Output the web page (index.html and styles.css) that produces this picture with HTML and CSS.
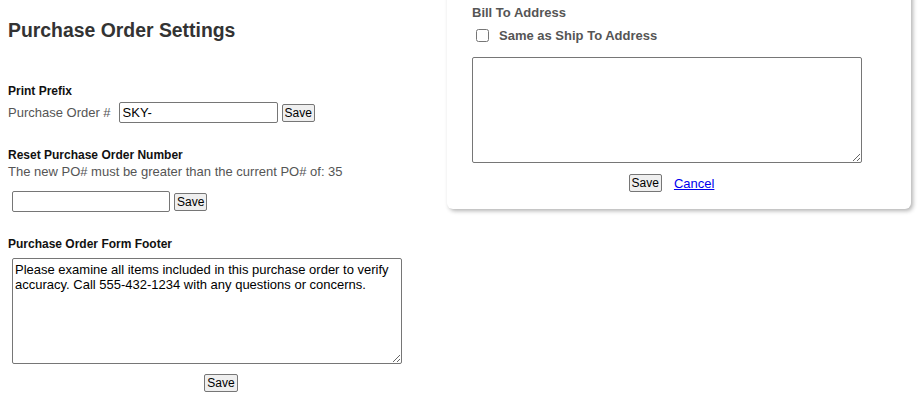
FILE: index.html
```html
<!DOCTYPE html>
<html lang="en">
<head>
  <meta charset="UTF-8" />
  <title>Purchase Order Settings</title>
  <link rel="stylesheet" href="styles.css">
</head>
<body>
  <div class="settings">
    <h1>Purchase Order Settings</h1>

    <!-- Print prefix -->
    <h3 class="label first">Print Prefix</h3>
    <div class="row">
      <span class="muted">Purchase Order #</span>
      <input type="text" class="prefix" value="SKY-" />
      <button>Save</button>
    </div>

    <!-- Reset PO number -->
    <h3 class="label">Reset Purchase Order Number</h3>
    <p class="muted desc">The new PO# must be greater than the current PO# of: 35</p>
    <div class="row indent">
      <input type="text" class="po-number" />
      <button>Save</button>
    </div>

    <!-- Footer -->
    <h3 class="label">Purchase Order Form Footer</h3>
    <textarea class="footer-text indent">Please examine all items included in this purchase order to verify accuracy. Call 555-432-1234 with any questions or concerns.</textarea>
    <div class="center-row">
      <button>Save</button>
    </div>
  </div>

  <!-- Bill to popup -->
  <div class="popup">
    <h4>Bill To Address</h4>
    <label class="check">
      <input type="checkbox" />
      Same as Ship To Address
    </label>
    <textarea class="address"></textarea>
    <div class="actions">
      <button>Save</button>
      <a href="#">Cancel</a>
    </div>
  </div>
</body>
</html>
```

FILE: styles.css
```css
body {
  font-family: "Liberation Sans", Arial, sans-serif;
  margin: 0;
  background-color: #fff;
  color: #111;
}
.settings {
  padding: 0 8px;
  width: 426px;
}
h1 {
  font-size: 19.4px;
  line-height: 23px;
  color: #333;
  margin: 19px 0 0;
}
.label {
  font-size: 12px;
  line-height: 14px;
  margin: 25px 0 0;
}
.label.first {
  margin-top: 42px;
}
.row {
  display: flex;
  align-items: center;
  gap: 4px;
  margin-top: 4px;
  height: 21px;
}
.muted {
  color: #555;
  font-size: 13px;
}
.row .muted {
  margin-right: 4px;
}
.desc {
  margin: 2px 0 12px;
  line-height: 15px;
}
.indent {
  margin-left: 4px;
}
input[type="text"] {
  font-family: inherit;
  font-size: 13px;
  height: 21px;
  box-sizing: border-box;
  border: 1px solid #767676;
  border-radius: 2px;
  padding: 0 3px;
  color: #000;
}
.prefix {
  width: 159px;
}
.po-number {
  width: 158px;
}
button {
  font-family: inherit;
  font-size: 12px;
  height: 18px;
  padding: 0 2px;
  background-color: #efefef;
  border: 1px solid #767676;
  border-radius: 2px;
  color: #000;
}
textarea {
  display: block;
  font-family: inherit;
  font-size: 13px;
  line-height: 15px;
  width: 390px;
  height: 106px;
  box-sizing: border-box;
  border: 1px solid #767676;
  border-radius: 2px;
  padding: 3px 2px;
  color: #000;
  resize: both;
}
.footer-text {
  margin-top: 7px;
}
.center-row {
  display: flex;
  justify-content: center;
  margin-top: 10px;
}
.popup {
  position: absolute;
  top: -10px;
  left: 447px;
  width: 464px;
  box-sizing: border-box;
  padding: 15px 0 0 25px;
  height: 219px;
  background-color: #fff;
  border-radius: 6px;
  box-shadow: 2px 2px 4px rgba(0, 0, 0, 0.3);
}
.popup h4 {
  font-size: 13px;
  line-height: 15px;
  color: #555;
  margin: 0;
}
.check {
  display: flex;
  align-items: center;
  font-size: 13px;
  font-weight: bold;
  color: #555;
  margin-top: 8px;
  line-height: 15px;
}
.check input {
  width: 13px;
  height: 13px;
  margin: 0 10px 0 4px;
}
.address {
  margin-top: 14px;
}
.actions {
  display: flex;
  justify-content: center;
  align-items: center;
  gap: 12px;
  width: 399px;
  margin-top: 11px;
}
.actions a {
  font-size: 13px;
  color: #00e;
}
```
